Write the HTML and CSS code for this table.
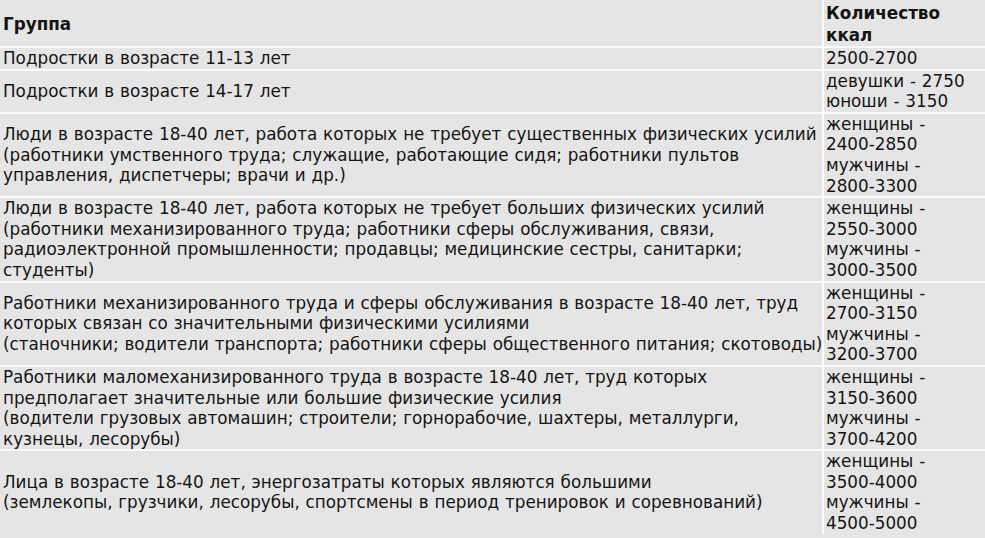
FILE: index.html
```html
<!DOCTYPE html>
<html lang="ru">
<head>
<meta charset="utf-8">
<title>Нормы калорий</title>
<link rel="stylesheet" href="styles.css">
</head>
<body>
<table class="kcal-table">
  <colgroup>
    <col class="col-group">
    <col class="col-kcal">
  </colgroup>
  <thead>
    <tr>
      <th class="group">Группа</th>
      <th class="kcal">Количество<br>ккал</th>
    </tr>
  </thead>
  <tbody>
    <tr>
      <td class="group">Подростки в возрасте 11-13 лет</td>
      <td class="kcal">2500-2700</td>
    </tr>
    <tr>
      <td class="group">Подростки в возрасте 14-17 лет</td>
      <td class="kcal">девушки - 2750<br>юноши - 3150</td>
    </tr>
    <tr>
      <td class="group">Люди в возрасте 18-40 лет, работа которых не требует существенных физических усилий<br>(работники умственного труда; служащие, работающие сидя; работники пультов<br>управления, диспетчеры; врачи и др.)</td>
      <td class="kcal">женщины -<br>2400-2850<br>мужчины -<br>2800-3300</td>
    </tr>
    <tr>
      <td class="group">Люди в возрасте 18-40 лет, работа которых не требует больших физических усилий<br>(работники механизированного труда; работники сферы обслуживания, связи,<br>радиоэлектронной промышленности; продавцы; медицинские сестры, санитарки;<br>студенты)</td>
      <td class="kcal">женщины -<br>2550-3000<br>мужчины -<br>3000-3500</td>
    </tr>
    <tr>
      <td class="group">Работники механизированного труда и сферы обслуживания в возрасте 18-40 лет, труд<br>которых связан со значительными физическими усилиями<br>(станочники; водители транспорта; работники сферы общественного питания; скотоводы)</td>
      <td class="kcal">женщины -<br>2700-3150<br>мужчины -<br>3200-3700</td>
    </tr>
    <tr>
      <td class="group">Работники маломеханизированного труда в возрасте 18-40 лет, труд которых<br>предполагает значительные или большие физические усилия<br>(водители грузовых автомашин; строители; горнорабочие, шахтеры, металлурги,<br>кузнецы, лесорубы)</td>
      <td class="kcal">женщины -<br>3150-3600<br>мужчины -<br>3700-4200</td>
    </tr>
    <tr>
      <td class="group">Лица в возрасте 18-40 лет, энергозатраты которых являются большими<br>(землекопы, грузчики, лесорубы, спортсмены в период тренировок и соревнований)</td>
      <td class="kcal">женщины -<br>3500-4000<br>мужчины -<br>4500-5000</td>
    </tr>
  </tbody>
</table>
</body>
</html>
```

FILE: styles.css
```css
html, body {
  margin: 0;
  padding: 0;
  background: #e5e5e5;
  overflow: hidden;
}

body {
  font-family: "DejaVu Sans", Verdana, sans-serif;
  font-size: 16.8px;
  line-height: 20.6px;
  word-spacing: 0.5px;
  color: #141414;
}

.kcal-table {
  width: 985px;
  table-layout: fixed;
  border-collapse: separate;
  border-spacing: 0;
}

.col-group { width: 822px; }
.col-kcal { width: 163px; }

.kcal-table th,
.kcal-table td {
  background: #e5e5e5;
  padding: 0 2px 0 3px;
  white-space: nowrap;
  text-align: left;
  font-weight: normal;
}

.kcal-table th {
  font-weight: bold;
  line-height: 22px;
  padding-top: 2px;
  padding-bottom: 0;
}

.kcal-table td {
  border-top: 2px solid #fbfbfb;
}

.kcal-table .group {
  vertical-align: middle;
}

.kcal-table .kcal {
  vertical-align: top;
  border-left: 2px solid #fbfbfb;
  padding-left: 2px;
}
```
